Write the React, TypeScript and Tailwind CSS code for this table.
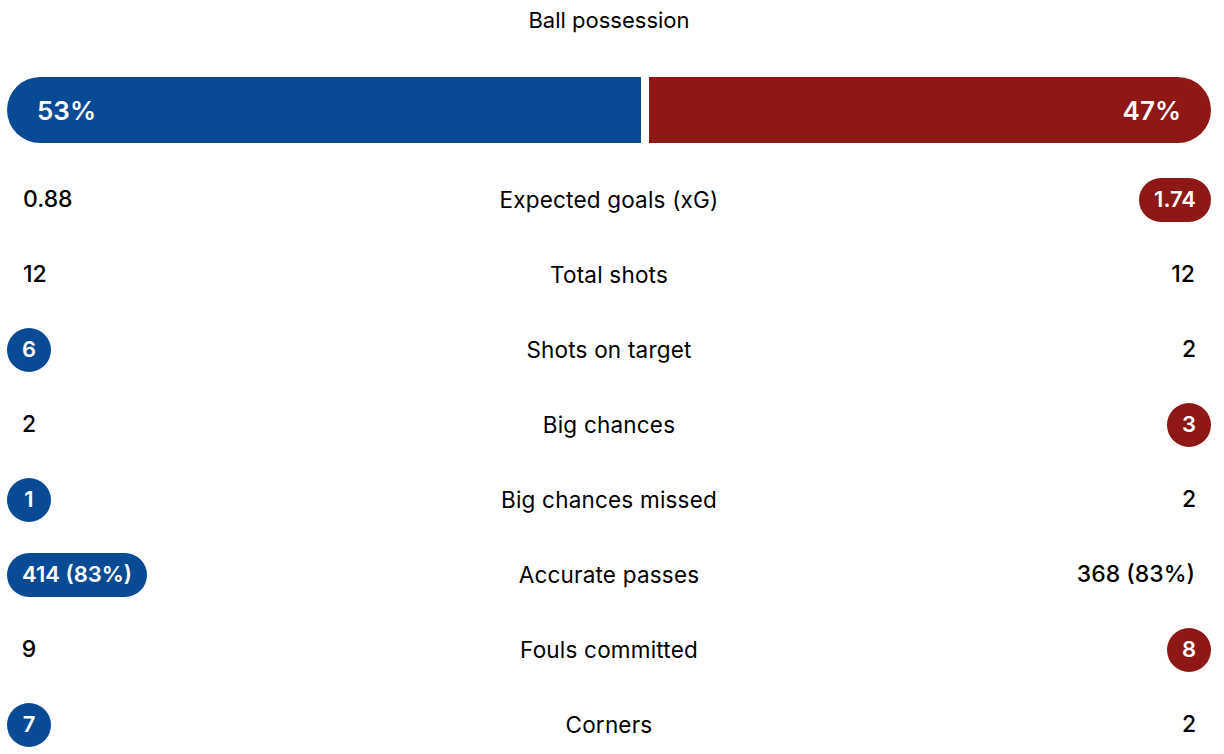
import React from "react";

type Side = "none" | "home" | "away";
type Row = { label: string; home: string; away: string; hl: Side };

const rows: Row[] = [
  { label: "Expected goals (xG)", home: "0.88", away: "1.74", hl: "away" },
  { label: "Total shots", home: "12", away: "12", hl: "none" },
  { label: "Shots on target", home: "6", away: "2", hl: "home" },
  { label: "Big chances", home: "2", away: "3", hl: "away" },
  { label: "Big chances missed", home: "1", away: "2", hl: "home" },
  { label: "Accurate passes", home: "414 (83%)", away: "368 (83%)", hl: "home" },
  { label: "Fouls committed", home: "9", away: "8", hl: "away" },
  { label: "Corners", home: "7", away: "2", hl: "home" },
];

function Value({ v, active, color }: { v: string; active: boolean; color: string }) {
  const short = v.length <= 1;
  if (active) {
    return (
      <span
        className={`inline-flex h-[44px] items-center justify-center rounded-full text-white font-semibold text-[22px] ${color} ${
          short ? "w-[44px]" : "px-[15px]"
        }`}
      >
        {v}
      </span>
    );
  }
  return (
    <span className={`inline-flex h-[44px] items-center text-black font-medium ${short ? "w-[44px] justify-center" : "px-4"}`}>
      {v}
    </span>
  );
}

export default function App() {
  return (
    <div
      className="w-[1224px] h-[754px] bg-white overflow-hidden pl-[7px] pr-[13px]"
      style={{ fontFamily: "Inter, 'Noto Sans', sans-serif" }}
    >
      <div className="h-[40px] flex items-center justify-center text-[22px] text-black">Ball possession</div>
      <div className="mt-[37px] flex h-[66px] gap-[8px]">
        <div className="w-[634px] bg-[#084b94] rounded-l-full flex items-center pl-[30px] text-white text-[26px] font-semibold">
          53%
        </div>
        <div className="flex-1 bg-[#8d1815] rounded-r-full flex items-center justify-end pr-[30px] text-white text-[26px] font-semibold">
          47%
        </div>
      </div>
      <div className="mt-[19px] flex flex-col">
        {rows.map((r) => (
          <div key={r.label} className="h-[75px] grid grid-cols-[1fr_auto_1fr] items-center text-[23px]">
            <div className="flex justify-start">
              <Value v={r.home} active={r.hl === "home"} color="bg-[#084b94]" />
            </div>
            <div className="text-black text-center text-[22.5px] tracking-[0.2px]">{r.label}</div>
            <div className="flex justify-end">
              <Value v={r.away} active={r.hl === "away"} color="bg-[#8d1815]" />
            </div>
          </div>
        ))}
      </div>
    </div>
  );
}
